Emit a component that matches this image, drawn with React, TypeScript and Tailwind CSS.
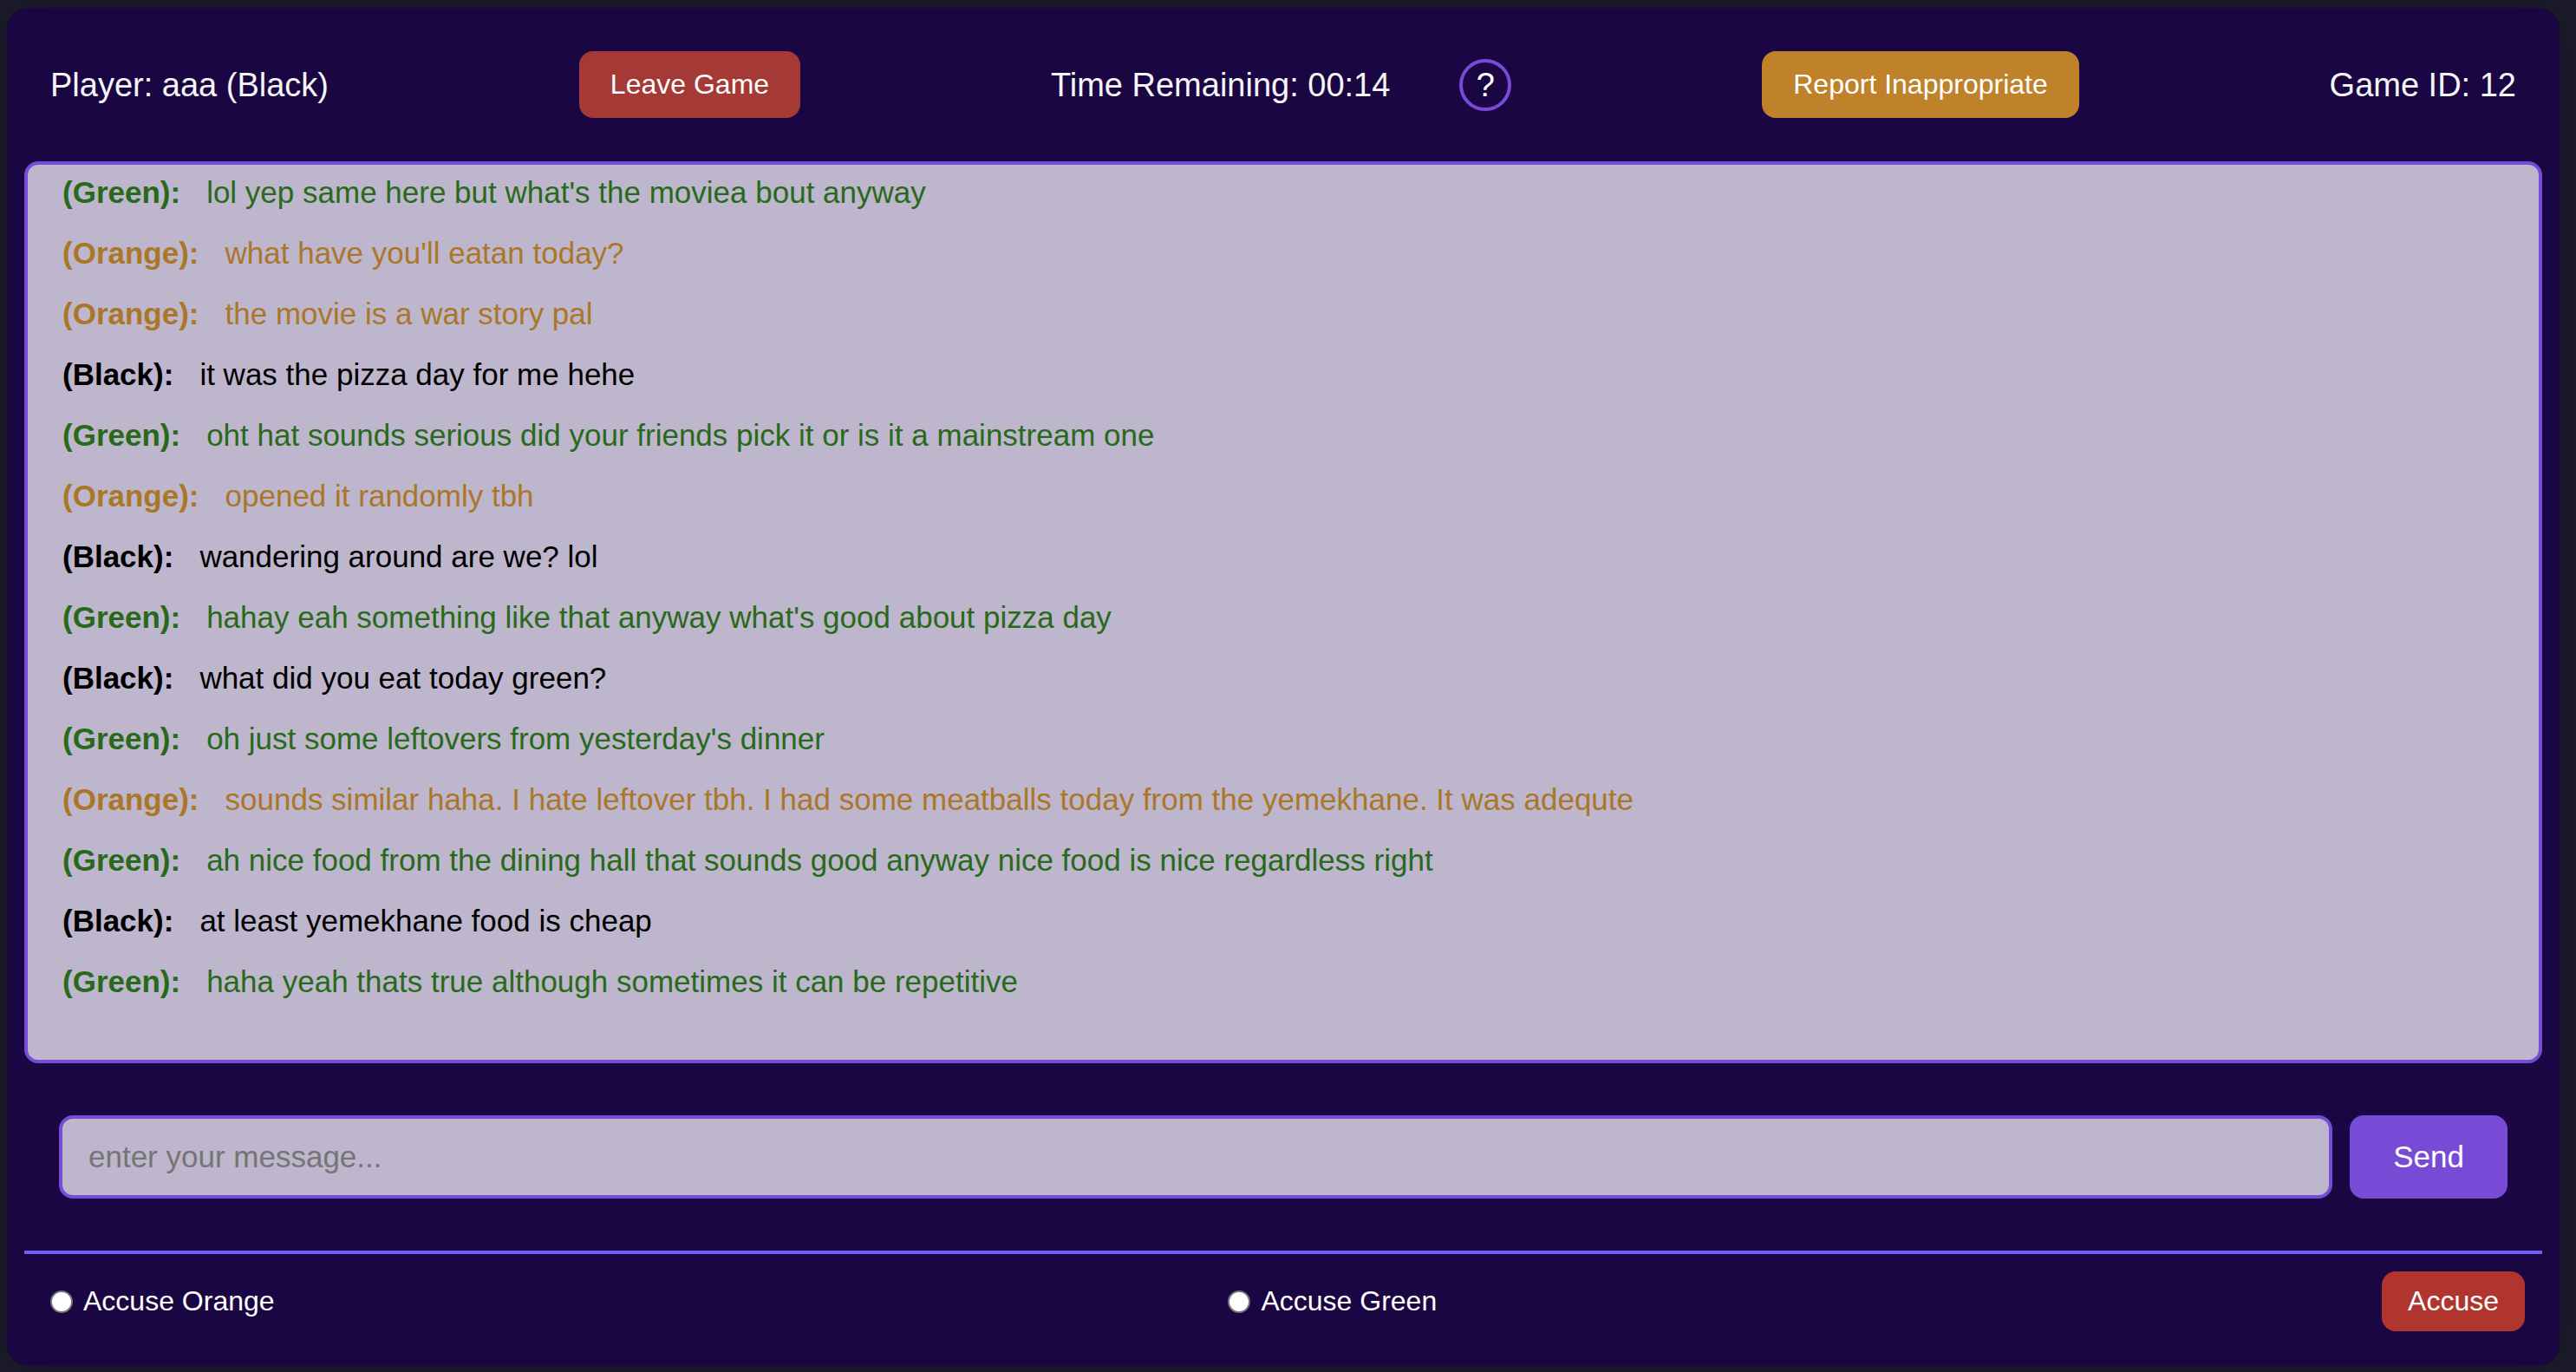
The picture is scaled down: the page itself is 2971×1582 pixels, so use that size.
import { useState } from "react";

type Player = "Green" | "Orange" | "Black";

const textColors: Record<Player, string> = {
  Green: "text-[#286a1a]",
  Orange: "text-[#aa7728]",
  Black: "text-black",
};

const messages: { from: Player; text: string }[] = [
  { from: "Green", text: "lol yep same here but what's the moviea bout anyway" },
  { from: "Orange", text: "what have you'll eatan today?" },
  { from: "Orange", text: "the movie is a war story pal" },
  { from: "Black", text: "it was the pizza day for me hehe" },
  { from: "Green", text: "oht hat sounds serious did your friends pick it or is it a mainstream one" },
  { from: "Orange", text: "opened it randomly tbh" },
  { from: "Black", text: "wandering around are we? lol" },
  { from: "Green", text: "hahay eah something like that anyway what's good about pizza day" },
  { from: "Black", text: "what did you eat today green?" },
  { from: "Green", text: "oh just some leftovers from yesterday's dinner" },
  {
    from: "Orange",
    text: "sounds similar haha. I hate leftover tbh. I had some meatballs today from the yemekhane. It was adequte",
  },
  { from: "Green", text: "ah nice food from the dining hall that sounds good anyway nice food is nice regardless right" },
  { from: "Black", text: "at least yemekhane food is cheap" },
  { from: "Green", text: "haha yeah thats true although sometimes it can be repetitive" },
];

function Header() {
  return (
    <header className="flex items-center justify-between px-[30px] py-[30px] text-[38px] leading-[48px] text-[#f5f5f5]">
      <div>Player: aaa (Black)</div>
      <button className="rounded-2xl bg-[#a43936] px-9 py-5 text-[32px] leading-[37px] text-white">Leave Game</button>
      <div className="flex items-center gap-20">
        <div>Time Remaining: 00:14</div>
        <button
          aria-label="Help"
          className="flex size-[60px] items-center justify-center rounded-full border-4 border-[#784bd7] text-white"
        >
          ?
        </button>
      </div>
      <button className="rounded-2xl bg-[#bf822b] px-9 py-5 text-[32px] leading-[37px] text-white">
        Report Inappropriate
      </button>
      <div>Game ID: 12</div>
    </header>
  );
}

function Accusation({ name }: { name: string }) {
  return (
    <label className="flex items-center gap-3 pl-[10px] text-[32px] leading-[37px]">
      <input
        type="radio"
        name="accuse"
        value={name}
        className="size-[26px] appearance-none rounded-full border-2 border-[#767676] bg-white checked:border-8 checked:border-[#784bd7]"
      />
      Accuse {name}
    </label>
  );
}

export default function App() {
  const [draft, setDraft] = useState("");
  return (
    <div className="flex min-h-screen bg-[#1c1c2d] pt-[9px] pr-[19px] pb-[7px] pl-2 font-['Liberation_Sans',Arial,sans-serif] text-white">
      <main className="flex flex-1 flex-col rounded-3xl bg-[#1b0644] p-5 shadow-[0_0_40px_rgba(0,0,0,0.3)]">
        <Header />
        <section
          aria-label="Chat"
          className="mt-5 flex flex-1 flex-col gap-[30px] rounded-2xl border-4 border-[#784bd7] bg-[#beb6cd] px-10 pt-3 text-[35px] leading-10"
        >
          {messages.map((m, i) => (
            <p key={i} className={`flex gap-[30px] ${textColors[m.from]}`}>
              <strong>({m.from}):</strong>
              <span>{m.text}</span>
            </p>
          ))}
        </section>
        <form className="flex gap-5 px-10 py-[60px]" onSubmit={(e) => e.preventDefault()}>
          <input
            type="text"
            aria-label="Message"
            placeholder="enter your message..."
            value={draft}
            onChange={(e) => setDraft(e.target.value)}
            className="h-24 min-w-0 flex-1 rounded-2xl border-4 border-[#784bd7] bg-[#beb6cd] px-[30px] text-[35px] text-black placeholder:text-[#757575]"
          />
          <button type="submit" className="rounded-2xl bg-[#784bd7] px-[50px] text-[35px] leading-10">
            Send
          </button>
        </form>
        <form
          className="flex items-center justify-between border-t-4 border-[#6b61f6] p-5"
          onSubmit={(e) => e.preventDefault()}
        >
          <Accusation name="Orange" />
          <Accusation name="Green" />
          <button type="submit" className="rounded-2xl bg-[#b0352f] px-[30px] py-4 text-[32px] leading-[37px]">
            Accuse
          </button>
        </form>
      </main>
    </div>
  );
}
